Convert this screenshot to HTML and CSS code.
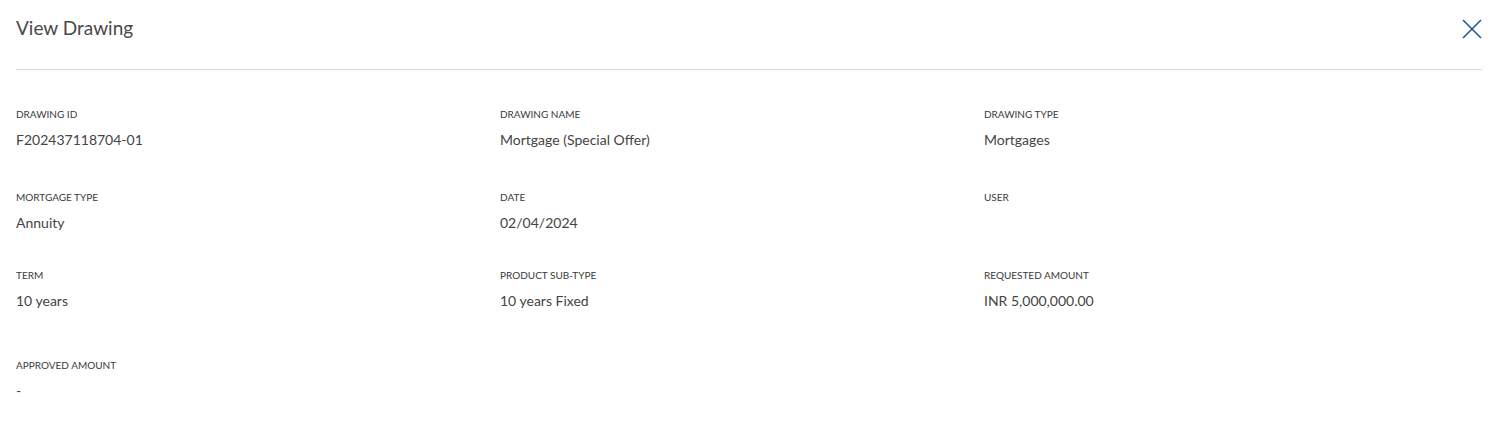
FILE: index.html
```html
<!DOCTYPE html>
<html lang="en">
<head>
    <meta charset="UTF-8">
    <meta name="viewport" content="width=device-width, initial-scale=1.0">
    <title>View Drawing</title>
    <link rel="stylesheet" href="styles.css">
</head>
<body>

    <div class="modal">
        <div class="modal-header">
            <h2>View Drawing</h2>
            <button class="close-btn" aria-label="Close">
                <svg width="20" height="20" viewBox="0 0 20 20">
                    <path d="M1 1 L19 19 M19 1 L1 19" stroke="#1d5893" stroke-width="1.6" fill="none"/>
                </svg>
            </button>
        </div>

        <div class="details">
            <div class="field">
                <div class="label">Drawing ID</div>
                <div class="value">F202437118704-01</div>
            </div>
            <div class="field">
                <div class="label">Drawing Name</div>
                <div class="value">Mortgage (Special Offer)</div>
            </div>
            <div class="field">
                <div class="label">Drawing Type</div>
                <div class="value">Mortgages</div>
            </div>

            <div class="field">
                <div class="label">Mortgage Type</div>
                <div class="value">Annuity</div>
            </div>
            <div class="field">
                <div class="label">Date</div>
                <div class="value">02/04/2024</div>
            </div>
            <div class="field">
                <div class="label">User</div>
                <div class="value"></div>
            </div>

            <div class="field">
                <div class="label">Term</div>
                <div class="value">10 years</div>
            </div>
            <div class="field">
                <div class="label">Product Sub-Type</div>
                <div class="value">10 years Fixed</div>
            </div>
            <div class="field">
                <div class="label">Requested Amount</div>
                <div class="value">INR 5,000,000.00</div>
            </div>

            <div class="field">
                <div class="label">Approved Amount</div>
                <div class="value">-</div>
            </div>
        </div>
    </div>

</body>
</html>
```

FILE: styles.css
```css
body {
    font-family: Lato, "Liberation Sans", sans-serif;
    background-color: #fff;
    color: #333;
    margin: 0;
}
.modal {
    padding: 0 17px 0 16px;
}
.modal-header {
    display: flex;
    justify-content: space-between;
    align-items: flex-start;
    height: 70px;
    box-sizing: border-box;
    padding-top: 16px;
    border-bottom: 1px solid #d9d9d9;
}
.modal-header h2 {
    margin: 0;
    font-size: 19px;
    line-height: 24px;
    font-weight: normal;
    color: #4a4a4a;
}
.close-btn {
    background: none;
    border: none;
    padding: 0;
    margin-top: 3px;
    width: 20px;
    height: 20px;
    cursor: pointer;
}
.close-btn svg {
    display: block;
}
.details {
    display: grid;
    grid-template-columns: 484px 484px 1fr;
    grid-template-rows: 83px 78px 90px auto;
    padding-top: 37px;
}
.label {
    font-size: 10px;
    line-height: 14px;
    text-transform: uppercase;
    color: #3a3a3a;
}
.value {
    font-size: 14px;
    line-height: 20px;
    margin-top: 9px;
    color: #444;
    min-height: 20px;
}
```
